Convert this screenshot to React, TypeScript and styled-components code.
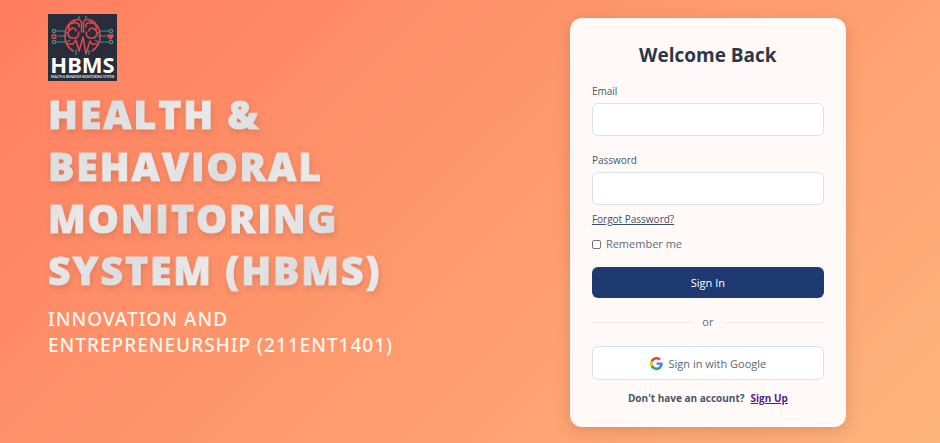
import React from "react";
import styled, { createGlobalStyle } from "styled-components";

const GlobalStyle = createGlobalStyle`
  *, *::before, *::after { box-sizing: border-box; }
  body {
    margin: 0;
    background: #ff7e5f;
    font-family: "Open Sans", "Noto Sans", sans-serif;
    color: #4a5568;
  }
  h1, h2, p { margin: 0; }
  button, input { font: inherit; }
`;

const Page = styled.main`
  display: grid;
  grid-template-columns: minmax(0, 41fr) minmax(300px, 40fr);
  align-items: start;
  min-height: 100vh;
  background: linear-gradient(135deg, #ff7e5f, #feb47b);
`;

const Brand = styled.section`
  padding: 14px 64px 24px 48px;
`;

const Logo = styled.svg`
  display: block;
  width: 69px;
  height: 67px;
`;

const Title = styled.h1`
  margin-top: 7px;
  font-family: "Open Sans", "Noto Sans", sans-serif;
  font-size: 39px;
  font-weight: 800;
  line-height: 52px;
  letter-spacing: 2px;
  text-transform: uppercase;
  color: transparent;
  -webkit-text-stroke: 1px transparent;
  background: repeating-linear-gradient(135deg, #ebe9e9 0, #dddddf 60px, #ebe9e9 120px);
  background-clip: text;
  -webkit-background-clip: text;
  filter: drop-shadow(1px 3px 3px rgba(90, 60, 60, 0.2));
`;

const Subtitle = styled.p`
  margin-top: 10px;
  font-family: "Noto Sans", "Open Sans", sans-serif;
  font-size: 19px;
  font-weight: 500;
  line-height: 26px;
  letter-spacing: 1px;
  text-transform: uppercase;
  color: #fff6ee;
`;

const FormSide = styled.section`
  display: flex;
  justify-content: center;
  padding: 18px 16px 16px;
`;

const Card = styled.form`
  width: 100%;
  max-width: 276px;
  padding: 20px 22px;
  border-radius: 12px;
  background: #fffaf7;
  box-shadow: 0 4px 16px rgba(90, 50, 30, 0.2);
`;

const CardTitle = styled.h2`
  font-size: 19px;
  font-weight: 700;
  line-height: 34px;
  text-align: center;
  color: #2d3748;
`;

const Field = styled.div<{ $spaced?: boolean }>`
  display: flex;
  flex-direction: column;
  gap: 4px;
  margin-top: ${({ $spaced }) => ($spaced ? 17 : 12)}px;
`;

const Label = styled.label`
  font-size: 10px;
  line-height: 15px;
`;

const Input = styled.input`
  width: 100%;
  height: 33px;
  padding: 0 12px;
  border: 1px solid #d9e1ec;
  border-radius: 6px;
  background: #fff;
  font-size: 12px;
`;

const ForgotLink = styled.a`
  display: block;
  width: fit-content;
  margin-top: 7px;
  font-size: 10px;
  line-height: 14px;
  color: #3f4e6b;
`;

const Remember = styled.label`
  display: flex;
  align-items: center;
  gap: 5px;
  margin-top: 10px;
  font-size: 11px;
  line-height: 16px;
  color: #626b7a;
`;

const Checkbox = styled.input`
  appearance: none;
  width: 9px;
  height: 9px;
  margin: 0;
  border: 1px solid #767676;
  border-radius: 2px;
  background: #fff;
  &:checked { background: #1e3a70; }
`;

const Button = styled.button<{ $primary?: boolean }>`
  display: flex;
  align-items: center;
  justify-content: center;
  gap: 6px;
  width: 100%;
  height: ${({ $primary }) => ($primary ? 31 : 34)}px;
  margin-top: ${({ $primary }) => ($primary ? 15 : 16)}px;
  padding: 0;
  border: ${({ $primary }) => ($primary ? "0" : "1px solid #d9e1ec")};
  border-radius: 6px;
  background: ${({ $primary }) => ($primary ? "#1e3a70" : "#fff")};
  color: ${({ $primary }) => ($primary ? "#fff" : "#5b6575")};
  font-size: 11px;
  cursor: pointer;
`;

const Divider = styled.div`
  display: flex;
  align-items: center;
  gap: 10px;
  margin-top: 16px;
  font-size: 11px;
  line-height: 16px;
  color: #626b7a;
  &::before, &::after {
    content: "";
    flex: 1;
    height: 1px;
    background: #eceaed;
  }
`;

const Signup = styled.p`
  display: flex;
  justify-content: center;
  gap: 6px;
  margin-top: 11px;
  padding-bottom: 1px;
  font-size: 10px;
  font-weight: 700;
  line-height: 15px;
`;

const SignupLink = styled.a`
  color: #551a8b;
`;

function HbmsLogo() {
  return (
    <Logo viewBox="0 0 69 67" role="img" aria-label="HBMS">
      <rect width="69" height="67" fill="#292c39" />
      <g fill="none" stroke="#439094" strokeWidth="1.2">
        <path d="M8 17h9l4 4M10 22h9M8 28h11l3-2M61 17h-9l-4 4M59 22h-9M61 28H50l-3-2" />
        <path d="M31 5V2M38 5V2M28 36v5M41 36v5" />
        <circle cx="6" cy="17" r="1.7" />
        <circle cx="6" cy="28" r="1.7" />
        <circle cx="63" cy="17" r="1.7" />
        <circle cx="63" cy="28" r="1.7" />
      </g>
      <g fill="none" stroke="#d9484d" strokeWidth="1.6" strokeLinecap="round" strokeLinejoin="round">
        <path d="M25 37C14 30 14 13 26 6M44 37c11-7 11-24-1-31" />
        <path d="M33.5 8c-2-4-7-3-8 1-4 0-6 4-4 7-3 3-1 8 3 8 4 1 7-2 6-6M33.5 8v10M27 9c3-1 5 2 4 4M22 16c2-3 6-2 6 1" />
        <path d="M35.5 8c2-4 7-3 8 1 4 0 6 4 4 7 3 3 1 8-3 8-4 1-7-2-6-6M35.5 8v10M42 9c-3-1-5 2-4 4M47 16c-2-3-6-2-6 1" />
        <path d="M20 30h5l3-4 3 11 4-14 3 17 4-13 2 3h5" />
        <circle cx="6" cy="22.5" r="1.9" />
      </g>
      <path d="M62.500 26l-3-3c-1-3 2-4 3-2 1-2 4-1 3 2z" fill="#dc4750" />
      <text x="34.5" y="59" textAnchor="middle" fill="#fff" fontFamily="Noto Sans" fontSize="22" fontWeight="700">HBMS</text>
      <text x="34.5" y="64" textAnchor="middle" fill="#e3e3e6" fontFamily="Noto Sans" fontSize="3" fontWeight="600">HEALTH &amp; BEHAVIOR MONITORING SYSTEM</text>
    </Logo>
  );
}

function GoogleIcon() {
  return (
    <svg width="13" height="13" viewBox="0 0 48 48" aria-hidden="true">
      <path fill="#EA4335" d="M24 9.5c3.5 0 6.7 1.2 9.2 3.6l6.9-6.900C35.900 2.400 30.500 0 24 0 14.600 0 6.500 5.400 2.600 13.200l8 6.200C12.400 13.700 17.700 9.500 24 9.500z" />
      <path fill="#4285F4" d="M47 24.600c0-1.600-.2-3.100-.4-4.600H24v9h12.900c-.6 3-2.300 5.500-4.800 7.200l7.700 6C44.400 38 47 31.800 47 24.600z" />
      <path fill="#FBBC05" d="M10.500 28.600a14.500 14.500 0 0 1 0-9.200l-8-6.200a24 24 0 0 0 0 21.600z" />
      <path fill="#34A853" d="M24 48c6.500 0 11.900-2.100 15.900-5.800l-7.700-6c-2.200 1.500-4.900 2.300-8.200 2.300-6.300 0-11.600-4.200-13.500-9.900l-8 6.200C6.500 42.600 14.600 48 24 48z" />
    </svg>
  );
}

export default function App() {
  return (
    <>
      <GlobalStyle />
      <Page>
        <Brand>
          <HbmsLogo />
          <Title>Health &amp; Behavioral Monitoring System (HBMS)</Title>
          <Subtitle>Innovation and Entrepreneurship (211ENT1401)</Subtitle>
        </Brand>
        <FormSide>
          <Card onSubmit={(event) => event.preventDefault()}>
            <CardTitle>Welcome Back</CardTitle>
            <Field>
              <Label htmlFor="email">Email</Label>
              <Input id="email" type="email" />
            </Field>
            <Field $spaced>
              <Label htmlFor="password">Password</Label>
              <Input id="password" type="password" />
            </Field>
            <ForgotLink href="#forgot">Forgot Password?</ForgotLink>
            <Remember>
              <Checkbox type="checkbox" />
              Remember me
            </Remember>
            <Button $primary type="submit">Sign In</Button>
            <Divider>or</Divider>
            <Button type="button">
              <GoogleIcon />
              Sign in with Google
            </Button>
            <Signup>
              Don't have an account?
              <SignupLink href="#signup">Sign Up</SignupLink>
            </Signup>
          </Card>
        </FormSide>
      </Page>
    </>
  );
}
